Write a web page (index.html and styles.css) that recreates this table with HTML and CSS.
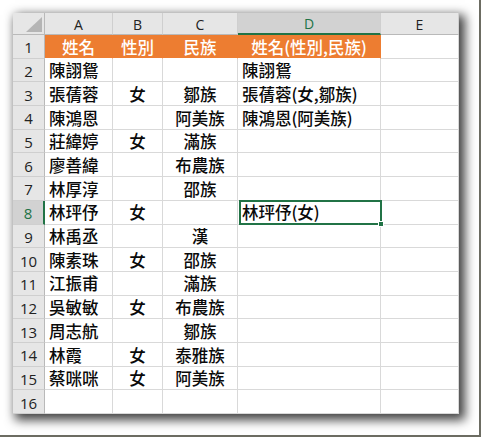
FILE: index.html
```html
<!DOCTYPE html>
<html lang="zh-Hant">
<head>
<meta charset="utf-8">
<title>姓名(性別,民族)</title>
<link rel="stylesheet" href="styles.css">
</head>
<body>
<div class="frame">
  <div class="sheet">
    <div class="hd corner"><span class="tri"></span></div>
    <div class="hd col">A</div>
    <div class="hd col">B</div>
    <div class="hd col">C</div>
    <div class="hd col sel-col">D</div>
    <div class="hd col">E</div>

    <div class="hd row">1</div>
    <div class="c title">姓名</div><div class="c title">性別</div><div class="c title">民族</div><div class="c title">姓名(性別,民族)</div><div class="c"></div>

    <div class="hd row">2</div>
    <div class="c l">陳詡鴛</div><div class="c"></div><div class="c"></div><div class="c l">陳詡鴛</div><div class="c"></div>

    <div class="hd row">3</div>
    <div class="c l">張蒨蓉</div><div class="c m">女</div><div class="c m">鄒族</div><div class="c l">張蒨蓉(女,鄒族)</div><div class="c"></div>

    <div class="hd row">4</div>
    <div class="c l">陳鴻恩</div><div class="c"></div><div class="c m">阿美族</div><div class="c l">陳鴻恩(阿美族)</div><div class="c"></div>

    <div class="hd row">5</div>
    <div class="c l">莊緯婷</div><div class="c m">女</div><div class="c m">滿族</div><div class="c"></div><div class="c"></div>

    <div class="hd row">6</div>
    <div class="c l">廖善緯</div><div class="c"></div><div class="c m">布農族</div><div class="c"></div><div class="c"></div>

    <div class="hd row">7</div>
    <div class="c l">林厚淳</div><div class="c"></div><div class="c m">邵族</div><div class="c"></div><div class="c"></div>

    <div class="hd row sel-row">8</div>
    <div class="c l">林玶伃</div><div class="c m">女</div><div class="c"></div><div class="c l active">林玶伃(女)<span class="cursor"><span class="handle"></span></span></div><div class="c"></div>

    <div class="hd row">9</div>
    <div class="c l">林禹丞</div><div class="c"></div><div class="c m">漢</div><div class="c"></div><div class="c"></div>

    <div class="hd row">10</div>
    <div class="c l">陳素珠</div><div class="c m">女</div><div class="c m">邵族</div><div class="c"></div><div class="c"></div>

    <div class="hd row">11</div>
    <div class="c l">江振甫</div><div class="c"></div><div class="c m">滿族</div><div class="c"></div><div class="c"></div>

    <div class="hd row">12</div>
    <div class="c l">吳敏敏</div><div class="c m">女</div><div class="c m">布農族</div><div class="c"></div><div class="c"></div>

    <div class="hd row">13</div>
    <div class="c l">周志航</div><div class="c"></div><div class="c m">鄒族</div><div class="c"></div><div class="c"></div>

    <div class="hd row">14</div>
    <div class="c l">林霞</div><div class="c m">女</div><div class="c m">泰雅族</div><div class="c"></div><div class="c"></div>

    <div class="hd row">15</div>
    <div class="c l">蔡咪咪</div><div class="c m">女</div><div class="c m">阿美族</div><div class="c"></div><div class="c"></div>

    <div class="hd row">16</div>
    <div class="c"></div><div class="c"></div><div class="c"></div><div class="c"></div><div class="c"></div>
  </div>
</div>
</body>
</html>
```

FILE: styles.css
```css
* { box-sizing: border-box; }

html, body {
  margin: 0;
  padding: 0;
  background: #ffffff;
}

body {
  width: 484px;
  height: 440px;
  overflow: hidden;
  font-family: "Noto Sans CJK TC", "Noto Sans", sans-serif;
}

.frame {
  width: 481px;
  height: 437px;
  padding: 13px 0 0 13px;
  border-right: 2px solid #6c6c62;
  border-bottom: 2px solid #6c6c62;
  background: #ffffff;
}

.sheet {
  width: 446px;
  height: 401px;
  display: grid;
  grid-template-columns: 32px 68px 50px 75px 143px 78px;
  grid-template-rows: 22px repeat(16, 1fr);
  background: #ffffff;
  box-shadow: 4px 4px 10px 2px rgba(0, 0, 0, 0.75);
}

.hd {
  background: #e6e6e6;
  color: #222222;
  font-family: "Open Sans", "Liberation Sans", sans-serif;
  font-size: 14px;
  display: flex;
  align-items: center;
  justify-content: center;
  border-right: 1px solid #cfcfcf;
  border-bottom: 1px solid #cfcfcf;
}

.hd.col {
  border-bottom: 1px solid #b9b9b9;
  padding-top: 1px;
}

.hd.row {
  font-size: 15px;
  border-right: 1px solid #b9b9b9;
  padding-top: 2px;
}

.corner {
  position: relative;
  border-right: 1px solid #b9b9b9;
  border-bottom: 1px solid #b9b9b9;
}

.tri {
  position: absolute;
  right: 2px;
  bottom: 2px;
  width: 16px;
  height: 15px;
  background: #b5b5b5;
  clip-path: polygon(100% 0, 100% 100%, 0 100%);
}

.sel-col {
  background: #d2d2d2;
  color: #217346;
}

.hd.col.sel-col {
  border-bottom: 2px solid #217346;
}

.sel-row {
  background: #d2d2d2;
  color: #217346;
}

.hd.row.sel-row {
  border-right: 2px solid #217346;
}

.c {
  border-right: 1px solid #d9d9d9;
  border-bottom: 1px solid #d9d9d9;
  font-size: 16.5px;
  font-weight: 500;
  color: #0a0a0a;
  display: flex;
  align-items: center;
  white-space: nowrap;
  line-height: 1;
  padding-top: 1px;
}

.l {
  justify-content: flex-start;
  padding-left: 4px;
}

.m {
  justify-content: center;
}

.title {
  background: #ed7d31;
  color: #ffffff;
  justify-content: center;
  border-right: 1px solid #ed7d31;
  border-bottom: 1px solid #ffffff;
}

.active {
  position: relative;
}

.cursor {
  position: absolute;
  left: 1px;
  top: -1px;
  right: -2px;
  bottom: -1px;
  border: 2px solid #217346;
}

.handle {
  position: absolute;
  right: -4px;
  bottom: -4px;
  width: 6px;
  height: 6px;
  background: #217346;
  border: 1px solid #ffffff;
}
```
